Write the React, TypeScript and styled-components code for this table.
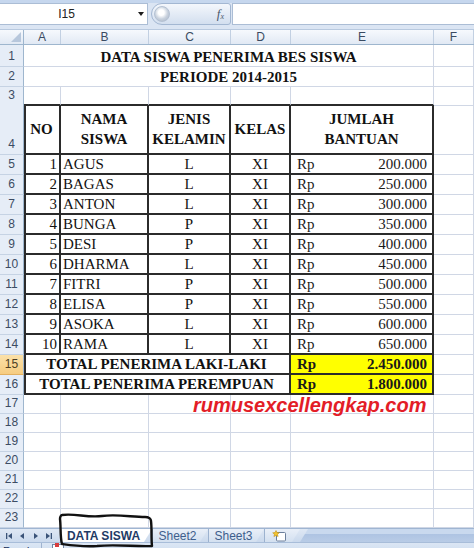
import React from "react";
import styled, { createGlobalStyle, css } from "styled-components";

const COLS = "24px 37px 88px 82px 60px 143px 40px";
const GRID = "#d0d7e5";
const DARK = "#2b2b2b";
const SERIF = `"Liberation Serif", "Times New Roman", serif`;
const SANS = `"Liberation Sans", Arial, sans-serif`;

const Global = createGlobalStyle`
  html, body { margin: 0; padding: 0; background: #fff; overflow: hidden; }
  * { box-sizing: border-box; }
`;

const Frame = styled.div`
  position: relative;
  width: 474px;
  height: 548px;
  overflow: hidden;
  display: flex;
  flex-direction: column;
  background: #fff;
`;

const FormulaBar = styled.div`
  height: 29px;
  flex: none;
  display: flex;
  align-items: flex-start;
  padding-top: 3px;
  background: linear-gradient(#c6d7ee 0 3px, #dbe5f3 3px);
`;

const NameBox = styled.div`
  position: relative;
  width: 148px;
  height: 22px;
  background: #fff;
  border: 1px solid #abbdd5;
  border-left: none;
  display: flex;
  align-items: center;
  justify-content: center;
  padding-right: 14px;
  font-family: ${SANS};
  font-size: 12px;
  color: #222;
`;

const DropArrow = styled.span`
  position: absolute;
  right: 3px;
  top: 8px;
  width: 0;
  height: 0;
  border-left: 3.5px solid transparent;
  border-right: 3.5px solid transparent;
  border-top: 4px solid #1c1c1c;
`;

const FxPill = styled.div`
  width: 80px;
  height: 22px;
  margin-left: 3px;
  border: 1px solid #a3b7d2;
  border-radius: 11px 3px 3px 11px;
  background: linear-gradient(#f4f7fc, #d3dfef);
  display: flex;
  align-items: center;
  justify-content: space-between;
  padding: 0 6px 0 2px;
`;

const Knob = styled.span`
  width: 16px;
  height: 16px;
  border-radius: 50%;
  border: 1px solid #b4c1d3;
  background: radial-gradient(circle at 45% 40%, #ffffff 0 25%, #c9d2de 55%, #a3b0c2 100%);
`;

const FxText = styled.span`
  font-family: ${SERIF};
  font-style: italic;
  font-size: 13px;
  color: #4a586d;
  sub {
    font-size: 8px;
    vertical-align: -1px;
  }
`;

const FormulaInput = styled.div`
  flex: 1;
  height: 22px;
  margin-left: 1px;
  background: #fff;
  border: 1px solid #abbdd5;
  border-right: none;
`;

const HeaderRow = styled.div`
  display: grid;
  grid-template-columns: ${COLS};
  height: 16px;
  flex: none;
  background: linear-gradient(#f6f9fd, #e1e9f4);
  border-top: 1px solid #b8c9df;
  border-bottom: 1px solid #9eb6ce;
`;

const ColHead = styled.div`
  border-right: 1px solid #c2d0e2;
  display: flex;
  align-items: center;
  justify-content: center;
  font-family: ${SANS};
  font-size: 12px;
  color: #3a4b62;
`;

const Corner = styled(ColHead)`
  position: relative;
  border-right: 1px solid #9eb6ce;
  &::after {
    content: "";
    position: absolute;
    right: 2px;
    bottom: 2px;
    border-left: 10px solid transparent;
    border-bottom: 10px solid #b7c7dc;
  }
`;

const Row = styled.div<{ $h: number }>`
  display: grid;
  grid-template-columns: ${COLS};
  height: ${(p) => p.$h}px;
  flex: none;
`;

const RowHead = styled.div<{ $sel?: boolean }>`
  display: flex;
  align-items: flex-end;
  justify-content: center;
  padding-bottom: 1px;
  font-family: ${SANS};
  font-size: 12px;
  line-height: 17px;
  color: #3c4c63;
  background: #e6edf7;
  border-right: 1px solid #9eb6ce;
  border-bottom: 1px solid #c6d3e4;
  ${(p) =>
    p.$sel &&
    css`
      background: linear-gradient(#fbe1a9, #f6cc80);
      color: #4d3d22;
      border-bottom-color: #e2b060;
    `}
`;

type Align = "left" | "center" | "right";
const justify = (a?: Align) => (a === "right" ? "flex-end" : a === "center" ? "center" : "flex-start");

const Cell = styled.div<{
  $span?: number;
  $align?: Align;
  $bold?: boolean;
  $tbl?: boolean;
  $under?: boolean;
  $edge?: boolean;
  $bg?: string;
}>`
  grid-column: span ${(p) => p.$span ?? 1};
  min-width: 0;
  display: flex;
  align-items: flex-end;
  justify-content: ${(p) => justify(p.$align)};
  padding: 0 2px;
  font-family: ${SERIF};
  font-size: 15px;
  line-height: 17px;
  font-weight: ${(p) => (p.$bold ? 700 : 400)};
  color: #111;
  white-space: nowrap;
  background: ${(p) => p.$bg ?? "transparent"};
  border-right: 1px solid ${GRID};
  border-bottom: 1px solid ${GRID};
  ${(p) =>
    p.$tbl &&
    css`
      border-right: 2px solid ${DARK};
      border-bottom: 2px solid ${DARK};
    `}
  ${(p) =>
    p.$under &&
    css`
      border-bottom: 2px solid ${DARK};
    `}
  ${(p) =>
    p.$edge &&
    css`
      box-shadow: inset 2px 0 0 ${DARK};
    `}
`;

const HeadCell = styled(Cell)`
  flex-direction: column;
  justify-content: center;
  align-items: center;
  line-height: 20px;
  text-align: center;
`;

const Money = styled(Cell)`
  justify-content: space-between;
  padding: 0 5px 0 6px;
  color: #1a1a1a;
`;

const Watermark = styled.div`
  position: absolute;
  left: 193px;
  top: 393px;
  font-family: ${SANS};
  font-style: italic;
  font-weight: 700;
  font-size: 20px;
  line-height: 24px;
  color: #e31d27;
  white-space: nowrap;
  pointer-events: none;
`;

const TabBar = styled.div`
  height: 14px;
  flex: none;
  display: flex;
  align-items: stretch;
  background: linear-gradient(#dfe8f4, #cad9ed);
  border-top: 1px solid #9fb5d2;
`;

const NavGroup = styled.div`
  width: 60px;
  flex: none;
  display: flex;
  align-items: center;
  justify-content: space-around;
  padding: 0 4px 0 2px;
`;

const SheetTab = styled.div<{ $active?: boolean; $w: number }>`
  width: ${(p) => p.$w}px;
  flex: none;
  display: flex;
  align-items: center;
  justify-content: center;
  padding-right: 6px;
  font-family: ${SANS};
  font-size: 12px;
  color: #3e5e8c;
  background: linear-gradient(#e9eff8, #d3e0f0);
  clip-path: polygon(0 0, 100% 0, calc(100% - 8px) 100%, 0 100%);
  border-left: 1px solid #9cb2cf;
  ${(p) =>
    p.$active &&
    css`
      background: #fff;
      color: #1f3b66;
      font-weight: 700;
      font-size: 12px;
    `}
`;

const TabTail = styled.div`
  flex: 1;
  background: linear-gradient(#c9d9ee 0 35%, #adc3e2 35%, #b9cce6);
  clip-path: polygon(8px 0, 100% 0, 100% 100%, 0 100%);
`;

const StatusBar = styled.div`
  height: 20px;
  flex: none;
  display: flex;
  align-items: flex-start;
  background: linear-gradient(#dbe6f4, #c6d7ed);
  border-top: 1px solid #a8bdd9;
  font-family: ${SANS};
  font-size: 11px;
  color: #15305a;
`;

const StatusText = styled.span`
  width: 42px;
  padding: 2px 0 0 3px;
  border-right: 1px solid #9fb3cf;
  height: 100%;
`;

const StatusIcon = styled.span`
  margin: 1px 0 0 10px;
  width: 12px;
  height: 12px;
  border: 1px solid #6f84a3;
  background: #fff;
  position: relative;
  &::before {
    content: "";
    position: absolute;
    left: 2px;
    top: -2px;
    width: 4px;
    height: 4px;
    background: #d93c3c;
  }
`;

const Scribble = styled.svg`
  position: absolute;
  left: 57px;
  top: 511px;
  pointer-events: none;
`;

const NavArrow: React.FC<{ dir: "first" | "prev" | "next" | "last" }> = ({ dir }) => {
  const fill = "#3a5378";
  return (
    <svg width="8" height="8" viewBox="0 0 8 8">
      {dir === "first" && (
        <>
          <rect x="1" y="1" width="1.3" height="6" fill={fill} />
          <path d="M7 1 L3 4 L7 7 Z" fill={fill} />
        </>
      )}
      {dir === "prev" && <path d="M6 1 L2 4 L6 7 Z" fill={fill} />}
      {dir === "next" && <path d="M2 1 L6 4 L2 7 Z" fill={fill} />}
      {dir === "last" && (
        <>
          <path d="M1 1 L5 4 L1 7 Z" fill={fill} />
          <rect x="5.7" y="1" width="1.3" height="6" fill={fill} />
        </>
      )}
    </svg>
  );
};

const InsertIcon = () => (
  <svg width="16" height="12" viewBox="0 0 16 12">
    <rect x="4.5" y="2.5" width="9" height="8.5" rx="1" fill="#fff" stroke="#6b7f9c" />
    <path d="M4 0.5 L5 2.6 L7.3 2.8 L5.6 4.3 L6.1 6.6 L4 5.4 L1.9 6.6 L2.4 4.3 L0.7 2.8 L3 2.6 Z" fill="#f4c430" stroke="#b8860b" strokeWidth="0.5" />
  </svg>
);

const people: [number, string, string, string][] = [
  [1, "AGUS", "L", "200.000"],
  [2, "BAGAS", "L", "250.000"],
  [3, "ANTON", "L", "300.000"],
  [4, "BUNGA", "P", "350.000"],
  [5, "DESI", "P", "400.000"],
  [6, "DHARMA", "L", "450.000"],
  [7, "FITRI", "P", "500.000"],
  [8, "ELISA", "P", "550.000"],
  [9, "ASOKA", "L", "600.000"],
  [10, "RAMA", "L", "650.000"],
];

const totals: [string, string][] = [
  ["TOTAL PENERIMA LAKI-LAKI", "2.450.000"],
  ["TOTAL PENERIMA PEREMPUAN", "1.800.000"],
];

export default function App() {
  return (
    <Frame>
      <Global />
      <FormulaBar>
        <NameBox>
          I15
          <DropArrow />
        </NameBox>
        <FxPill>
          <Knob />
          <FxText>
            f<sub>x</sub>
          </FxText>
        </FxPill>
        <FormulaInput />
      </FormulaBar>

      <HeaderRow>
        <Corner />
        {["A", "B", "C", "D", "E", "F"].map((c) => (
          <ColHead key={c}>{c}</ColHead>
        ))}
      </HeaderRow>

      <Row $h={22}>
        <RowHead>1</RowHead>
        <Cell $span={5} $align="center" $bold>
          DATA SISWA PENERIMA BES SISWA
        </Cell>
        <Cell />
      </Row>
      <Row $h={20}>
        <RowHead>2</RowHead>
        <Cell $span={5} $align="center" $bold>
          PERIODE 2014-2015
        </Cell>
        <Cell />
      </Row>
      <Row $h={18}>
        <RowHead>3</RowHead>
        <Cell $under />
        <Cell $under />
        <Cell $under />
        <Cell $under />
        <Cell $under />
        <Cell />
      </Row>
      <Row $h={50}>
        <RowHead>4</RowHead>
        <HeadCell $tbl $edge $bold>
          NO
        </HeadCell>
        <HeadCell $tbl $bold>
          <span>NAMA</span>
          <span>SISWA</span>
        </HeadCell>
        <HeadCell $tbl $bold>
          <span>JENIS</span>
          <span>KELAMIN</span>
        </HeadCell>
        <HeadCell $tbl $bold>
          KELAS
        </HeadCell>
        <HeadCell $tbl $bold>
          <span>JUMLAH</span>
          <span>BANTUAN</span>
        </HeadCell>
        <Cell />
      </Row>

      {people.map(([no, name, jk, amt], i) => (
        <Row $h={20} key={no}>
          <RowHead>{i + 5}</RowHead>
          <Cell $tbl $edge $align="right">
            {no}
          </Cell>
          <Cell $tbl>{name}</Cell>
          <Cell $tbl $align="center">
            {jk}
          </Cell>
          <Cell $tbl $align="center">
            XI
          </Cell>
          <Money $tbl>
            <span>Rp</span>
            <span>{amt}</span>
          </Money>
          <Cell />
        </Row>
      ))}

      {totals.map(([label, amt], i) => (
        <Row $h={20} key={label}>
          <RowHead $sel={i === 0}>{15 + i}</RowHead>
          <Cell $span={4} $tbl $edge $bold $align="center">
            {label}
          </Cell>
          <Money $tbl $bold $bg="#ffff00">
            <span>Rp</span>
            <span>{amt}</span>
          </Money>
          <Cell />
        </Row>
      ))}

      {[17, 18, 19, 20, 21, 22, 23].map((n) => (
        <Row $h={19} key={n}>
          <RowHead>{n}</RowHead>
          <Cell />
          <Cell />
          <Cell />
          <Cell />
          <Cell />
          <Cell />
        </Row>
      ))}

      <TabBar>
        <NavGroup>
          <NavArrow dir="first" />
          <NavArrow dir="prev" />
          <NavArrow dir="next" />
          <NavArrow dir="last" />
        </NavGroup>
        <SheetTab $active $w={92}>
          DATA SISWA
        </SheetTab>
        <SheetTab $w={56}>Sheet2</SheetTab>
        <SheetTab $w={56}>Sheet3</SheetTab>
        <SheetTab $w={36}>
          <InsertIcon />
        </SheetTab>
        <TabTail />
      </TabBar>
      <StatusBar>
        <StatusText>Ready</StatusText>
        <StatusIcon />
      </StatusBar>

      <Watermark>rumusexcellengkap.com</Watermark>

      <Scribble width="100" height="38" viewBox="0 0 100 38">
        <path
          d="M5 4 C18 2 30 7 45 5 C60 3 75 6 88 6 C92 6 94 8 94 10 C95 18 94 26 95 35 C80 36 60 33 40 35 C25 36 12 34 5 33 C3 26 4 16 3 8 C3 6 4 4 5 4 Z"
          fill="none"
          stroke="#111"
          strokeWidth="2.4"
          strokeLinejoin="round"
        />
      </Scribble>
    </Frame>
  );
}
